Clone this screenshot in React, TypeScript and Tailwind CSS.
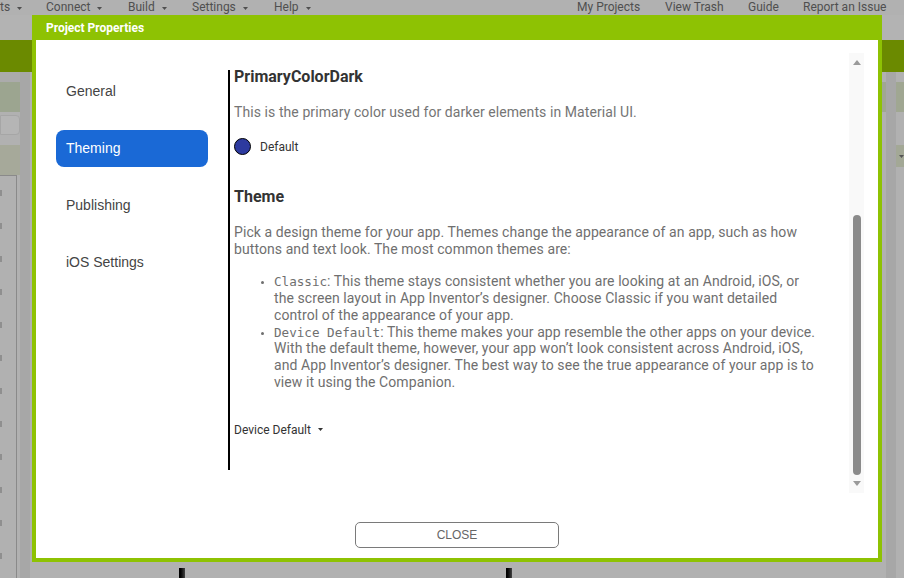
import React from 'react';

const roboto = { fontFamily: 'Roboto, "Liberation Sans", sans-serif' };
const arial = { fontFamily: '"Liberation Sans", Arial, sans-serif' };
const mono = { fontFamily: '"DejaVu Sans Mono", "Liberation Mono", monospace' };

const navItems = ['General', 'Theming', 'Publishing', 'iOS Settings'];

const Caret: React.FC<{ className?: string }> = ({ className = '' }) => (
  <svg width="5" height="3" viewBox="0 0 5 3" className={className}>
    <path d="M0 0 H5 L2.5 3 Z" fill="currentColor" />
  </svg>
);

const TopMenu: React.FC = () => {
  const left = [
    { label: 'ts', w: 'w-[46px]' },
    { label: 'Connect', w: 'w-[82px]' },
    { label: 'Build', w: 'w-[64px]' },
    { label: 'Settings', w: 'w-[82px]' },
    { label: 'Help', w: 'w-[60px]' },
  ];
  const right = [
    { label: 'My Projects', w: 'w-[88px]' },
    { label: 'View Trash', w: 'w-[83px]' },
    { label: 'Guide', w: 'w-[55px]' },
    { label: 'Report an Issue', w: 'w-[101px]' },
  ];
  return (
    <div className="h-[15px] flex items-start pt-[1px] text-[12px] leading-[13px] text-[#4f4f4f]" style={roboto}>
      {left.map((m) => (
        <div key={m.label} className={`${m.w} flex items-center gap-[7px] shrink-0`}>
          <span>{m.label}</span>
          <Caret className="mt-[1px]" />
        </div>
      ))}
      <div className="flex-1" />
      {right.map((m) => (
        <div key={m.label} className={`${m.w} shrink-0`}>
          {m.label}
        </div>
      ))}
    </div>
  );
};

const Background: React.FC = () => (
  <div className="w-[904px] h-[578px] bg-[#b1b1b1] flex flex-col overflow-hidden">
    <TopMenu />
    <div className="h-[25px] bg-[#b3b3b3]" />
    <div className="h-[32px] bg-[#6b8a00]" />
    <div className="flex-1 flex">
      {/* left strip of the designer */}
      <div className="w-[20px] flex flex-col">
        <div className="h-[10px] bg-[#ababab]" />
        <div className="h-[30px] bg-[#9ca590]" />
        <div className="h-[3px]" />
        <div className="h-[20px] bg-[#b5b5b5] border border-[#a6a6a6] rounded-r-[4px]" />
        <div className="h-[10px]" />
        <div className="h-[30px] bg-[#a6a99a]" />
        <div className="flex-1 border-r border-[#8a8a8a] border-t flex flex-col gap-[27px] pt-[14px] mr-[3px]">
          {Array.from({ length: 12 }).map((_, i) => (
            <div key={i} className="w-[2px] h-[6px] bg-[#8f8f8f]" />
          ))}
        </div>
      </div>
      <div className="w-[10px] bg-[#a7a7a7]" />
      <div className="flex-1 flex items-end">
        <div className="h-[10px] w-full flex">
          <div className="ml-[149px] w-[6px] h-[10px] bg-gradient-to-r from-black to-[#444]" />
          <div className="ml-[321px] w-[6px] h-[10px] bg-gradient-to-r from-black to-[#444]" />
        </div>
      </div>
      {/* right strip */}
      <div className="w-[22px] flex">
        <div className="w-[4px] flex flex-col">
          <div className="h-[10px]" />
          <div className="h-[30px] bg-[#a0a792]" />
        </div>
        <div className="w-[10px] bg-[#a7a7a7]" />
        <div className="flex-1 flex flex-col">
          <div className="h-[10px]" />
          <div className="h-[30px] bg-[#a0a792]" />
          <div className="h-[33px]" />
          <div className="h-[22px] bg-[#a3a896] flex items-center pl-[3px] text-[#555]">
            <Caret />
          </div>
        </div>
      </div>
    </div>
  </div>
);

const Scrollbar: React.FC = () => (
  <div className="w-[15px] h-[440px] mt-[13px] bg-[#f9f9f9] flex flex-col items-center">
    <svg width="8" height="5" viewBox="0 0 8 5" className="mt-[7px] text-[#9a9a9a]">
      <path d="M0 5 L4 0 L8 5 Z" fill="currentColor" />
    </svg>
    <div className="w-[8px] h-[260px] mt-[150px] rounded-full bg-[#8b8b8b]" />
    <svg width="8" height="5" viewBox="0 0 8 5" className="mt-[6px] text-[#9a9a9a]">
      <path d="M0 0 L8 0 L4 5 Z" fill="currentColor" />
    </svg>
  </div>
);

const ThemingContent: React.FC = () => (
  <div className="ml-[20px] mt-[30px] h-[400px] border-l-2 border-black pl-[4px] w-[594px]" style={roboto}>
    <div className="w-[587px]">
      <h2 className="text-[16px] font-bold leading-[14px] text-[#333]">PrimaryColorDark</h2>
      <p className="mt-[20px] text-[14px] leading-[17px] tracking-[0.08px] text-[#757575]">
        This is the primary color used for darker elements in Material UI.
      </p>
      <div className="mt-[17px] flex items-center">
        <div className="w-[17px] h-[17px] rounded-full bg-[#2d3a9f] border border-black" />
        <span className="ml-[9px] text-[12px] leading-[14px] text-[#333]">Default</span>
      </div>
      <h2 className="mt-[32px] text-[16px] font-bold leading-[20px] text-[#333]">Theme</h2>
      <p className="mt-[17px] text-[14px] leading-[16.6px] tracking-[0.08px] text-[#6f6f6f]">
        Pick a design theme for your app. Themes change the appearance of an app, such as how buttons and
        text look. The most common themes are:
      </p>
      <ul className="mt-[16px] pl-[40px] list-disc text-[14px] leading-[16.8px] tracking-[0.08px] text-[#6f6f6f] marker:text-[10px]">
        <li>
          <code className="text-[12.6px] leading-none tracking-normal" style={mono}>Classic</code>: This theme stays
          consistent whether you are looking at an Android, iOS, or the screen layout in App Inventor’s designer.
          Choose Classic if you want detailed control of the appearance of your app.
        </li>
        <li>
          <code className="text-[12.6px] leading-none tracking-normal" style={mono}>Device Default</code>: This theme
          makes your app resemble the other apps on your device. With the default theme, however, your app won’t
          look consistent across Android, iOS, and App Inventor’s designer. The best way to see the true appearance
          of your app is to view it using the Companion.
        </li>
      </ul>
      <div className="mt-[32px] flex items-center gap-[7px] text-[12px] leading-[14px] text-[#333]">
        <span>Device Default</span>
        <Caret />
      </div>
    </div>
  </div>
);

export default function App() {
  return (
    <div className="relative w-[904px] h-[578px] overflow-hidden">
      <Background />

      {/* Project Properties dialog */}
      <div className="absolute left-[32px] top-[15px] w-[850px] h-[547px] bg-[#8ec203] flex flex-col px-[4px] pb-[4px]">
        <div className="h-[25px] flex items-center pl-[10px] text-[12px] font-bold text-white" style={roboto}>
          Project Properties
        </div>
        <div className="flex-1 bg-white flex flex-col">
          <div className="h-[457px] flex items-start">
            <div className="w-[172px] pl-[20px] pt-[33px] flex flex-col gap-[20px]" style={arial}>
              {navItems.map((item) => (
                <div
                  key={item}
                  className={`h-[37px] flex items-center pl-[10px] rounded-[8px] text-[14px] ${
                    item === 'Theming' ? 'bg-[#1a69d6] text-white' : 'text-[#444]'
                  }`}
                >
                  {item}
                </div>
              ))}
            </div>
            <ThemingContent />
            <div className="flex-1" />
            <div className="mr-[14px]">
              <Scrollbar />
            </div>
          </div>
          <div className="flex justify-center mt-[25px]">
            <button
              className="w-[204px] h-[26px] border border-[#7a7a7a] rounded-[5px] text-[12px] text-[#666] bg-white"
              style={arial}
            >
              CLOSE
            </button>
          </div>
        </div>
      </div>
    </div>
  );
}
